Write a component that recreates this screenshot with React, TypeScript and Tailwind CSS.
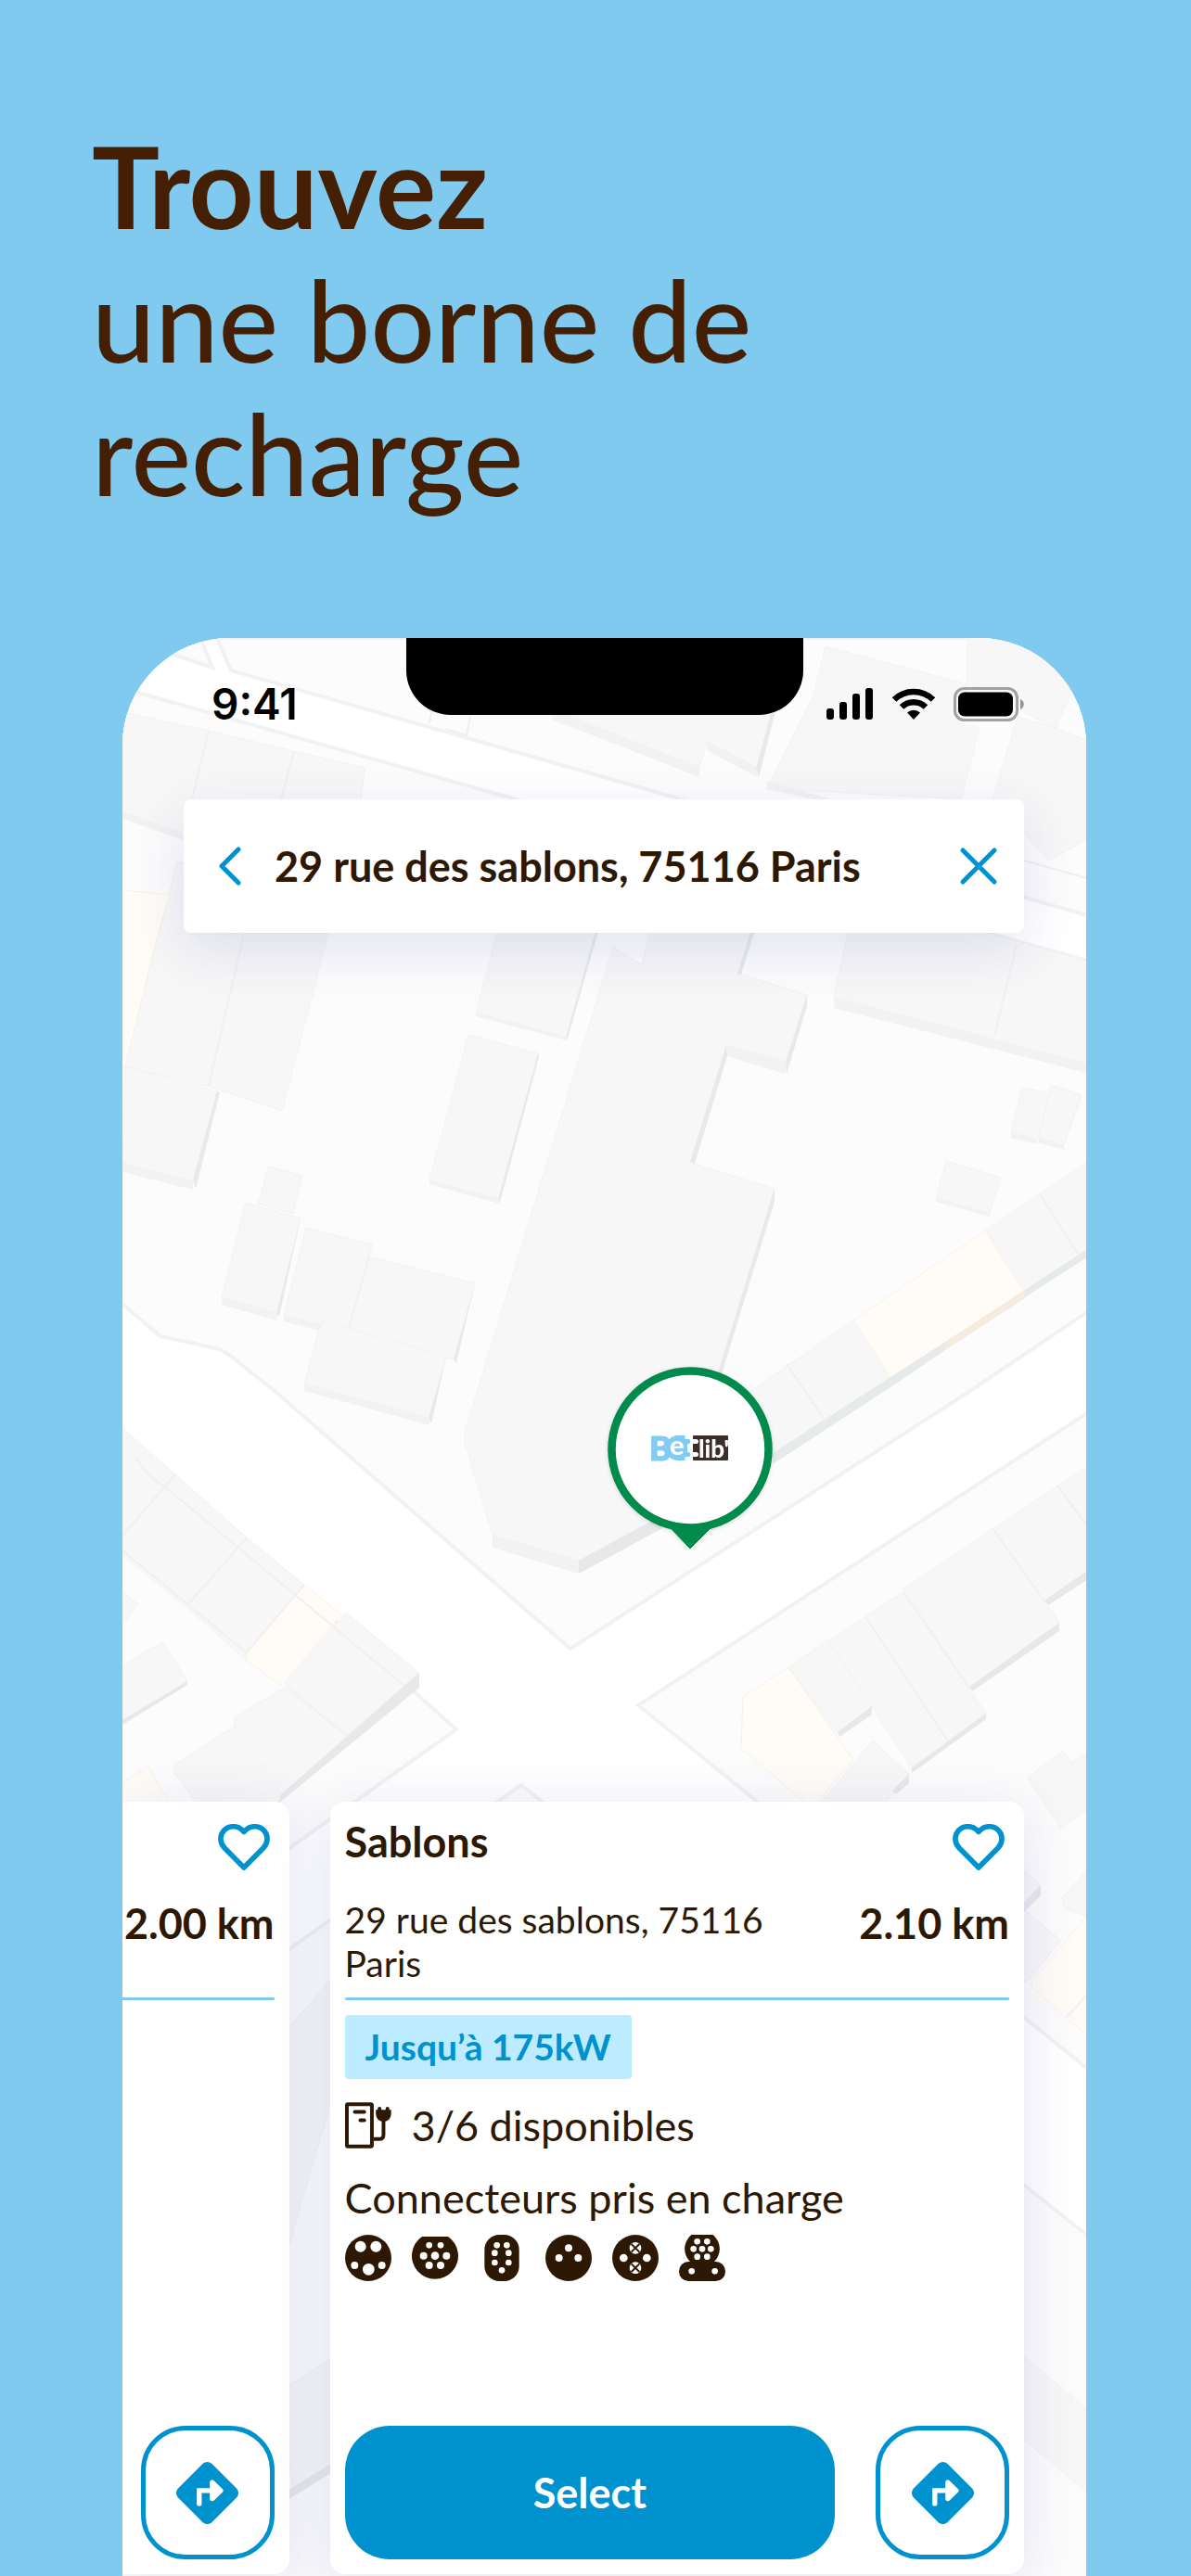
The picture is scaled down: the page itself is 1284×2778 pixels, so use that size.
import { useState } from 'react';
import type { ReactNode } from 'react';

type Wall = { face: string; color: string };

const SIDE = '#e7eaea';
const FRONT = '#f2f2f2';
const CORNER = '#e8e8eb';

const blocks = [
  '132,688 216,688 229,720 191,707 132,690',
  '234,688 249,723 1175,988 1175,688',
  '128,741 1175,1037 1175,1413 1046,1500 615,1778 296,1500 247,1461 237,1455 173,1441 128,1403',
  '128,1540 492,1865 312,1993 128,2120',
  '1175,1522 688,1839 1175,2233',
  '562,1925 128,2232 128,2780 1175,2780 1175,2413',
];

const buildings = [
  '132,768 225,788 317,810 393,828 385,900 198,900 132,875',
  '188,942 354,1007 304,1198 223,1171 135,1150',
  '190,930 375,930 354,1007 172,1007',
  '135,1150 234,1177 208,1273 132,1254',
  '290,1258 326,1268 316,1309 278,1298',
  '265,1297 324,1314 299,1416 239,1399',
  '330,1324 401,1342 398,1355 512,1384 490,1466 306,1418',
  '347,1424 481,1463 463,1529 328,1492',
  '505,1116 580,1136 538,1293 463,1273',
  '540,990 646,990 611,1118 513,1092',
  '661,1021 692,1041 700,1007 704,980 820,980 797,1050 870,1073 848,1145 783,1127 745,1254 835,1282 776,1480 740,1620 624,1683 531,1655 501,1555 502,1541',
  '920,980 1067,1007 1175,1037 1175,1148 899,1075',
  '1102,1173 1131,1179 1119,1229 1090,1221',
  '1133,1170 1166,1181 1147,1235 1120,1227',
  '1020,1252 1079,1270 1067,1308 1009,1292',
  '1175,1251 809,1500 780,1530 833,1568 850,1557 1175,1346',
  '595,772 754,827 763,800 817,828 850,700 595,700',
  '890,697 1043,738 1033,780 1056,785 1036,862 827,850 877,750',
  '1043,738 1138,785 1155,747 1175,720 1175,688 1043,688',
  '1097,773 1138,785 1175,800 1175,903 1131,928 1070,862',
  '132,1540 189,1590 266,1658 328,1709 265,1790 203,1735 132,1677',
  '373,1739 452,1804 375,1871 308,1815',
  '306,1820 375,1873 304,1937 253,1862 253,1852',
  '253,1862 304,1937 290,1960 225,1960 188,1913 188,1903',
  '132,1796 175,1771 202,1813 132,1855',
  '132,1717 149,1730 132,1752',
  '850,1798 892,1769 940,1840 903,1869',
  '894,1769 974,1717 1063,1848 983,1907',
  '974,1713 1140,1602 1175,1580 1175,1692 1126,1727 1142,1750 1045,1820',
  '941,1877 980,1913 950,1950 880,1950',
  '1108,1917 1146,1888 1156,1900 1175,1888 1175,1950 1144,1972',
  '1090,2005 1122,2033 1090,2068',
  '1100,2056 1144,2093 1111,2133 1090,2150',
  '1145,2047 1175,2013 1175,2068 1148,2058',
  '300,2200 356,2135 356,2270 312,2420',
  '300,2580 400,2515 400,2630 316,2685',
  '1090,2530 1175,2600 1175,2690 1090,2620',
];

const walls: Wall[] = [
  { face: '132,875 198,898 198,906 132,883', color: FRONT },
  { face: '132,1254 208,1273 208,1283 132,1264', color: FRONT },
  { face: '234,1177 237,1178 211,1282 208,1273', color: SIDE },
  { face: '239,1399 299,1416 299,1424 239,1407', color: FRONT },
  { face: '324,1314 301,1420 298,1416', color: SIDE },
  { face: '306,1418 345,1428 345,1435 306,1425', color: FRONT },
  { face: '512,1384 492,1470 489,1466', color: SIDE },
  { face: '328,1492 463,1529 463,1537 328,1500', color: FRONT },
  { face: '481,1463 465,1535 462,1529', color: SIDE },
  { face: '463,1273 538,1293 538,1298 463,1277', color: FRONT },
  { face: '580,1136 581,1140 539,1297 537,1293', color: SIDE },
  { face: '513,1092 611,1118 611,1122 513,1096', color: FRONT },
  { face: '646,990 649,990 612,1120 610,1118', color: SIDE },
  { face: '817,980 821,980 799,1051 795,1050', color: SIDE },
  { face: '870,1073 870,1085 848,1158 847,1145', color: SIDE },
  { face: '783,1127 847,1145 847,1158 783,1139', color: FRONT },
  { face: '783,1127 784,1139 749,1255 744,1253', color: SIDE },
  { face: '835,1282 835,1296 778,1482 774,1480', color: SIDE },
  { face: '531,1655 624,1683 624,1697 531,1669', color: FRONT },
  { face: '624,1683 740,1620 740,1634 624,1697', color: CORNER },
  { face: '899,1075 1175,1148 1175,1158 899,1087', color: FRONT },
  { face: '1090,1221 1119,1229 1119,1234 1090,1227', color: FRONT },
  { face: '1120,1227 1147,1235 1147,1240 1120,1232', color: FRONT },
  { face: '1009,1292 1067,1308 1067,1312 1009,1296', color: FRONT },
  { face: '1175,1345 1105,1391 1105,1399 1175,1354', color: SIDE },
  { face: '1105,1391 1019,1447 1019,1456 1105,1400', color: '#f6ebdf' },
  { face: '1019,1447 833,1567 833,1579 960,1496 1019,1456', color: SIDE },
  { face: '595,764 754,827 754,838 595,776', color: FRONT },
  { face: '763,800 817,828 817,838 763,810', color: FRONT },
  { face: '850,700 853,700 818,838 815,828', color: SIDE },
  { face: '827,842 910,866 895,866 827,851', color: FRONT },
  { face: '452,1804 452,1820 300,1945 303,1935', color: CORNER },
  { face: '202,1813 202,1817 132,1860 132,1855', color: CORNER },
  { face: '940,1840 940,1849 905,1873 903,1868', color: CORNER },
  { face: '1063,1848 1063,1854 983,1912 983,1906', color: CORNER },
  { face: '1142,1750 1142,1759 1048,1824 1045,1819', color: CORNER },
  { face: '1175,1692 1175,1702 1130,1731 1126,1726', color: CORNER },
  { face: '980,1913 980,1923 966,1935 962,1931', color: CORNER },
  { face: '1122,2033 1122,2044 1100,2066 1100,2056', color: CORNER },
  { face: '300,2692 360,2655 360,2665 300,2702', color: SIDE },
];

const shops = [
  '132,960 183,965 172,1000 135,1150 132,1150',
  '920,1424 1062,1327 1105,1393 960,1486',
  '801,1830 850,1798 920,1898 875,1950 799,1885',
  '328,1709 368,1741 304,1818 265,1790 265,1783',
  '132,1922 160,1905 185,1950 132,1950',
  '1175,2062 1112,2137 1112,2143 1175,2198',
];

const seams =
  'M225 788 207 862M317 810 303 862M263 1007 225 1171M398 1355 376 1432M1096 1018 1072 1118M848 1471 890 1532M1122 1289 1163 1354M189 1590 132 1656M266 1658 203 1730M328 1709 265 1783M934 1745 1022 1878M974 1717 1045 1820M1070 1648 1126 1727M1140 1602 1175 1650M507 772 503 793 480 786M463 780 466 765M146 1570 Q155 1590 180 1605L436 1818M132 1672 265 1782M308 1818 375 1873M1104 928 1175 948M1150 2175 1175 2148';

const StreetMap = () => (
  <svg
    className="absolute inset-0 h-full w-full"
    viewBox="132 688 1039 2090"
    preserveAspectRatio="xMidYMin slice"
    aria-hidden="true"
  >
    <rect x="128" y="680" width="1050" height="2110" fill="#ffffff" />
    {blocks.map((points) => (
      <polygon key={points} points={points} fill="#fcfcfc" stroke="#f2f2f2" strokeWidth="4" />
    ))}
    {buildings.map((points) => (
      <polygon key={points} points={points} fill="#f7f7f7" stroke="#f2f2f2" />
    ))}
    {shops.map((points) => (
      <polygon key={points} points={points} fill="#fffcf7" stroke="#f9f1e8" />
    ))}
    {walls.map(({ face, color }) => (
      <polygon key={face} points={face} fill={color} />
    ))}
    <path d={seams} fill="none" stroke="#f0f0f1" strokeWidth="2" />
  </svg>
);

const StatusBar = () => (
  <div className="grid h-[174px] grid-cols-[1fr_428px_1fr] items-start">
    <div className="flex h-[142px] items-center pl-24 font-['Inter',sans-serif] text-[46px] leading-[58px] font-semibold text-black">
      9:41
    </div>
    <div className="h-[83px] rounded-b-[48px] bg-black" />
    <div className="flex h-[142px] items-center justify-end gap-[19px] pr-[67px]">
      <svg width="51" height="34" viewBox="0 0 51 34" aria-hidden="true">
        <rect y="22" width="8" height="12" rx="3" />
        <rect x="14" y="15" width="8" height="19" rx="3" />
        <rect x="28" y="6" width="8" height="28" rx="3" />
        <rect x="42" width="8" height="34" rx="3" />
      </svg>
      <svg width="48" height="34" viewBox="0 0 48 34" fill="none" stroke="#000" aria-hidden="true">
        <path d="M3 12.5a30 30 0 0 1 42 0" strokeWidth="6.5" />
        <path d="M11 20.5a19 19 0 0 1 26 0" strokeWidth="6.5" />
        <path d="M24 34 17 26.5a10 10 0 0 1 14 0Z" fill="#000" stroke="none" />
      </svg>
      <svg width="76" height="37" viewBox="0 0 76 37" aria-hidden="true">
        <rect x="1.5" y="1.5" width="67" height="34" rx="10" fill="none" stroke="#000" strokeOpacity="0.35" strokeWidth="3" />
        <rect x="5" y="5.5" width="59" height="26" rx="7" />
        <path d="M72 13c5 2 5 9 0 11Z" fillOpacity="0.4" />
      </svg>
    </div>
  </div>
);

const SearchBar = () => {
  const [query, setQuery] = useState('29 rue des sablons, 75116 Paris');

  return (
    <div className="mr-[67px] ml-[66px] flex h-[144px] items-center rounded-lg bg-white pr-[26px] pl-[34px] shadow-[0_18px_60px_rgba(50,60,160,0.13)]">
      <button type="button" aria-label="Retour" className="mr-[34px] shrink-0 text-[#0092ce]">
        <svg width="30" height="44" viewBox="0 0 30 44" fill="none" stroke="currentColor" strokeWidth="5" strokeLinecap="round" strokeLinejoin="round">
          <path d="M25 4 7 22l18 18" />
        </svg>
      </button>
      <input
        type="text"
        aria-label="Adresse"
        value={query}
        onChange={(event) => setQuery(event.target.value)}
        className="min-w-0 flex-1 bg-transparent text-[45px] leading-[54px] font-bold outline-none"
      />
      <button type="button" aria-label="Effacer" onClick={() => setQuery('')} className="shrink-0 text-[#0092ce]">
        <svg width="46" height="46" viewBox="0 0 46 46" fill="none" stroke="currentColor" strokeWidth="5" strokeLinecap="round">
          <path d="M6 6l34 34M40 6 6 40" />
        </svg>
      </button>
    </div>
  );
};

const StationPin = () => (
  <svg
    className="absolute top-[786px] left-[523px] drop-shadow-sm"
    width="178"
    height="198"
    viewBox="0 0 178 198"
    role="img"
    aria-label="Belib'"
  >
    <path d="M66 172 89 196 113 172Z" fill="#008a4b" stroke="#008a4b" strokeLinejoin="round" />
    <circle cx="89" cy="89" r="84.500" fill="#fff" stroke="#008a4b" strokeWidth="8.500" />
    <g fontFamily="Lato, sans-serif" fontWeight="900">
      <text x="45" y="101" fontSize="36" fill="#82cbf3" stroke="#82cbf3" strokeWidth="1">B</text>
      <path d="M76 74h7.500v4H88a3 3 0 0 1 0 5h-2v9h2a3 3 0 0 1 0 5h-4.500v4H76a13.500 13.500 0 0 1 0-27Z" fill="#82cbf3" />
      <text x="67" y="95" fontSize="29" fill="#fff">e</text>
      <rect x="92" y="74" width="38" height="27" rx="1" fill="#3b2d29" />
      <path d="M91 78h4.500a2.500 2.500 0 0 1 0 5H91ZM91 92h4.500a2.500 2.500 0 0 1 0 5H91Z" fill="#fff" />
      <text x="98" y="98" fontSize="26" fill="#fff">lib'</text>
    </g>
  </svg>
);

const HeartButton = () => (
  <button type="button" aria-label="Ajouter aux favoris" className="mr-[5px] text-[#0092ce]">
    <svg width="56" height="50" viewBox="0 0 167 150" fill="none" stroke="currentColor" strokeWidth="17" strokeLinecap="round" strokeLinejoin="round">
      <path d="M83.500 141 21 78C5 61 4 37 19 21 34 5 61 4 76 18l7.500 7L91 18c15-14 42-13 57 3 15 16 14 40-2 57Z" />
    </svg>
  </button>
);

const DirectionsButton = () => (
  <button
    type="button"
    aria-label="Itinéraire"
    className="flex h-36 w-36 shrink-0 items-center justify-center rounded-[48px] border-[5px] border-[#0092ce] bg-white"
  >
    <svg width="67" height="67" viewBox="0 0 200 200">
      <path d="M85 6c9-8 21-8 30 0l79 79c8 9 8 21 0 30l-79 79c-9 8-21 8-30 0L6 115c-8-9-8-21 0-30Z" fill="#0092ce" />
      <path d="M74 134V92h42" fill="none" stroke="#fff" strokeWidth="16" strokeLinecap="round" />
      <path d="M116 66v52l27-26Z" fill="#fff" stroke="#fff" strokeWidth="16" strokeLinejoin="round" />
    </svg>
  </button>
);

const ChargerIcon = () => (
  <svg width="50" height="50" viewBox="0 0 152 150" fill="none" stroke="currentColor" strokeWidth="12" aria-hidden="true">
    <rect x="6" y="6" width="82" height="138" rx="4" />
    <path d="M32 31h31M50 58h13" strokeLinecap="round" />
    <path d="M94 120h18q14 0 14-14V60" />
    <path d="M101 24h50v14a25 25 0 0 1-50 0Z" fill="currentColor" stroke="none" />
    <path d="M113 20v6M139 20v6" strokeLinecap="round" />
  </svg>
);

const Holes = ({ at }: { at: number[][] }) => (
  <g fill="#fff">
    {at.map(([x, y, r]) => (
      <circle key={`${x}-${y}`} cx={x} cy={y} r={r} />
    ))}
  </g>
);

const connectors: { label: string; body: ReactNode; holes: number[][] }[] = [
  {
    label: 'Type 3',
    body: <circle cx="75" cy="75" r="75" />,
    holes: [[50, 38, 18], [100, 38, 18], [31, 99, 12], [119, 99, 12], [76, 112, 19]],
  },
  {
    label: 'Type 2',
    body: <path d="M33 6h84a75 75 0 1 1-84 0Z" />,
    holes: [[56, 34, 10], [93, 34, 10], [38, 68, 12], [75, 68, 13], [112, 68, 12], [56, 99, 12], [93, 99, 12]],
  },
  {
    label: 'Type 3C',
    body: <rect x="19" width="112" height="150" rx="48" />,
    holes: [[59, 34, 10], [91, 34, 10], [52, 59, 10], [97, 59, 10], [52, 90, 10], [97, 90, 10], [75, 115, 10]],
  },
  {
    label: 'Type E/F',
    body: <circle cx="75" cy="75" r="75" />,
    holes: [[75, 43, 12], [44, 75, 12], [106, 75, 12]],
  },
  {
    label: 'CHAdeMO',
    body: <circle cx="75" cy="75" r="75" />,
    holes: [[75, 43, 19], [75, 107, 19], [37, 75, 13], [112, 75, 13]],
  },
  {
    label: 'Combo CCS',
    body: (
      <>
        <path d="M40 0h70c28 26 28 62 4 87H36C12 62 12 26 40 0Z" />
        <rect y="87" width="150" height="63" rx="31" />
      </>
    ),
    holes: [[59, 22, 10], [91, 22, 10], [47, 46, 10], [75, 46, 10], [103, 46, 10], [59, 71, 10], [91, 71, 10], [41, 118, 10], [116, 118, 10]],
  },
];

const Connectors = () => (
  <div className="mt-[13px] flex gap-[22px]">
    {connectors.map(({ label, body, holes }) => (
      <svg key={label} width="50" height="50" viewBox="0 0 150 150" fill="currentColor" role="img" aria-label={label}>
        {body}
        <Holes at={holes} />
        {label === 'CHAdeMO' && (
          <path d="M62 30l26 26M88 30 62 56M62 94l26 26M88 94l-26 26" stroke="currentColor" strokeWidth="6" />
        )}
      </svg>
    ))}
  </div>
);

const cardShadow = 'shadow-[0_9px_60px_rgba(50,60,160,0.13)]';

const PreviousCard = () => (
  <article className={`flex min-h-[833px] min-w-0 flex-1 flex-col items-end rounded-r-2xl bg-white pt-4 pr-4 pb-4 ${cardShadow}`}>
    <div className="flex h-[66px] items-center">
      <HeartButton />
    </div>
    <p className="mt-[22px] min-h-[94px] text-[45px] leading-[54px] font-bold whitespace-nowrap">2.00 km</p>
    <hr className="mt-[13px] h-[3px] w-full rounded-r-full border-0 bg-[#80caf0]" />
    <div className="mt-auto">
      <DirectionsButton />
    </div>
  </article>
);

const StationCard = () => (
  <article className={`flex min-h-[833px] w-[77%] shrink-0 flex-col rounded-2xl bg-white p-4 ${cardShadow}`}>
    <div className="flex h-[66px] items-center justify-between">
      <h2 className="self-start text-[45px] leading-[54px] font-bold">Sablons</h2>
      <HeartButton />
    </div>
    <div className="mt-[22px] flex justify-between gap-6">
      <p className="max-w-[480px] text-[39px] leading-[47px]">29 rue des sablons, 75116 Paris</p>
      <p className="text-[45px] leading-[54px] font-bold whitespace-nowrap">2.10 km</p>
    </div>
    <hr className="mt-[13px] h-[3px] w-full rounded-full border-0 bg-[#80caf0]" />
    <p className="mt-4 self-start rounded bg-[#bdebff] px-[22px] text-[39px] leading-[69px] font-bold text-[#0092ce]">
      Jusqu’à 175kW
    </p>
    <div className="mt-[23px] flex items-center gap-[22px]">
      <ChargerIcon />
      <p className="text-[45px] leading-[54px]">3/6 disponibles</p>
    </div>
    <p className="mt-6 text-[45px] leading-[54px]">Connecteurs pris en charge</p>
    <Connectors />
    <div className="mt-auto flex gap-11">
      <button type="button" className="h-36 flex-1 rounded-[48px] bg-[#0092ce] text-[45px] leading-[54px] font-bold text-white">
        Select
      </button>
      <DirectionsButton />
    </div>
  </article>
);

const App = () => (
  <div className="flex min-h-screen flex-col bg-[#80caf0] font-['Lato',sans-serif] text-[#2d1804]">
    <h1 className="px-[99px] pt-32 pb-32 text-[122px] leading-[144px] text-[#441f04]">
      <span className="block font-bold">Trouvez</span>
      <span className="block font-medium">une borne de</span>
      <span className="block font-medium">recharge</span>
    </h1>

    <main className="relative mr-[113px] ml-[132px] flex flex-1 flex-col overflow-hidden rounded-t-[116px] bg-white">
      <StreetMap />
      <div className="relative flex flex-1 flex-col">
        <StatusBar />
        <SearchBar />
        <div className="h-[937px]" />
        <section className="flex gap-11 pr-[67px] pb-[2px]">
          <PreviousCard />
          <StationCard />
        </section>
        <StationPin />
      </div>
    </main>
  </div>
);

export default App;
